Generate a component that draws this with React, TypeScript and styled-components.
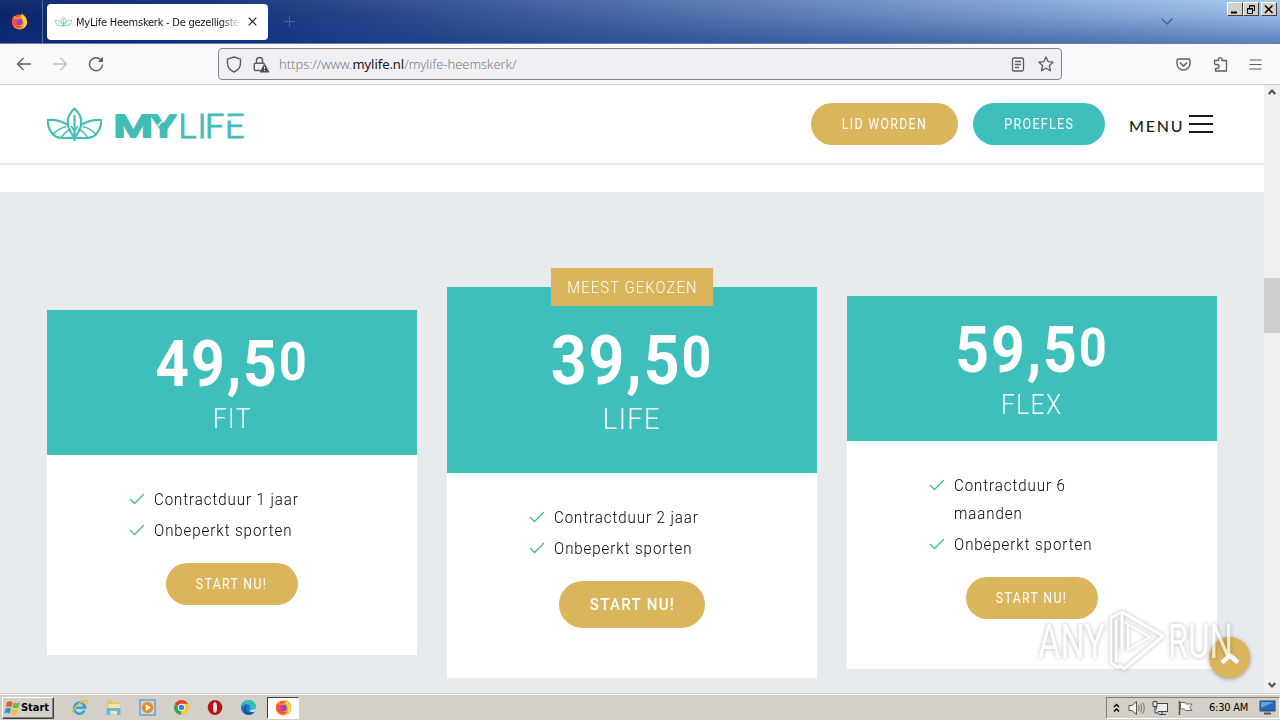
import React from "react";
import styled, { createGlobalStyle, css } from "styled-components";

const teal = "#3ebfbb";
const gold = "#dab55c";

type Plan = {
    euros: string;
    last: string;
    name: string;
    items: string[];
    featured?: boolean;
};

const plans: Plan[] = [
    { euros: "49,5", last: "0", name: "FIT", items: ["Contractduur 1 jaar", "Onbeperkt sporten"] },
    { euros: "39,5", last: "0", name: "LIFE", items: ["Contractduur 2 jaar", "Onbeperkt sporten"], featured: true },
    { euros: "59,5", last: "0", name: "FLEX", items: ["Contractduur 6 maanden", "Onbeperkt sporten"] }
];

const FirefoxIcon = ({ size = 17 }: { size?: number }) => (
    <svg width={size} height={size} viewBox="0 0 17 17">
        <circle cx="8.5" cy="9" r="7.6" fill="#ff5a36" />
        <path d="M1 9C1 5 3 3 4 2.6C4 4 5 5 7 5L10 3L11 0.5C15 3 17 7 15.6 11C14 16 7 18 3 14Z" fill="#ff9a22" />
        <path d="M11 0.5C12 4 16 5 15.8 10C15.4 14 12 16 9 16C13 14 14 10 12 7C11 5 10 3 11 0.5Z" fill="#ffd83f" />
        <circle cx="8.4" cy="9" r="3.2" fill="#8d43d6" />
        <path d="M1 8C2 15 8 17 13 13C9 14 5 12 5 8.5C6 7 8 8 9 7.4C8 6 6 6 4 6C3 5 3 4 3.2 3.4C2 4.4 1 6 1 8Z" fill="#ff4a4a" />
    </svg>
);

const Lotus = ({ w, h }: { w: number; h: number }) => (
    <svg width={w} height={h} viewBox="0 0 56 34">
        <g fill="none" stroke="#42bdb6" strokeWidth="2.1" strokeLinejoin="round">
            <path d="M28 1.5C20 9 17.500 18 28 30.500C38.500 18 36 9 28 1.500Z" />
            <path d="M28 8V34" />
            <path d="M20.500 17.500C14 13.500 7 12.500 1.200 13C1.200 22 6 31 16 31C21 31 25.500 30.800 28 30.800" />
            <path d="M35.500 17.500C42 13.500 49 12.500 54.800 13C54.800 22 50 31 40 31C35 31 30.500 30.800 28 30.800" />
            <path d="M6 28C9 24 14 21 20 19.500M50 28C47 24 42 21 36 19.500M15 30C19 25 21 23 24 22M41 30C37 25 35 23 32 22M28 24L24.500 19M28 24L31.500 19" strokeWidth="1.4" />
        </g>
    </svg>
);

const BrandLogo = () => (
    <LogoSvg width="198" height="36" viewBox="46 106 198 36">
        <g transform="translate(46.500 107)"><Lotus w={56} h={34} /></g>
        <g fill="#42bdb6" fontFamily="Roboto, sans-serif">
            <text x="113.500" y="137" fontSize="32" fontWeight="500" textLength="39.500" lengthAdjust="spacingAndGlyphs" stroke="#42bdb6" strokeWidth="2" strokeLinejoin="round">M</text>
            <text x="151" y="137" fontSize="32" fontWeight="500" textLength="25" lengthAdjust="spacingAndGlyphs" stroke="#42bdb6" strokeWidth="2" strokeLinejoin="round">Y</text>
            <text x="178.500 197.500 205 225" y="138" fontSize="34" fontWeight="300" stroke="#42bdb6" strokeWidth="1.100">LIFE</text>
        </g>
        <path d="M158 126L165.500 117" stroke="#fff" strokeWidth="1.300" />
        <path d="M226 118.500H231" stroke="#fff" strokeWidth="4" />
    </LogoSvg>
);

const App = () => (
    <Screen>
        <Global />
        <TabStrip>
            <Pinned><FirefoxIcon /></Pinned>
            <Tab>
                <Lotus w={17} h={11} />
                <TabTitle>MyLife Heemskerk - De gezelligste</TabTitle>
                <svg width="9" height="9" viewBox="0 0 9 9"><path d="M.7.7L8.300 8.300M8.300.7L.7 8.300" stroke="#222" strokeWidth="1.200" /></svg>
            </Tab>
            <NewTab><svg width="11" height="11" viewBox="0 0 11 11"><path d="M5.500 0V11M0 5.500H11" stroke="#56648a" /></svg></NewTab>
            <AllTabs><svg width="12" height="7" viewBox="0 0 12 7"><path d="M.6.6L6 6L11.400.6" fill="none" stroke="#45618f" strokeWidth="1.300" /></svg></AllTabs>
            <WindowButtons>
                <WinButton><svg width="10" height="9"><path d="M1 7.500H7" stroke="#000" strokeWidth="2" /></svg></WinButton>
                <WinButton>
                    <svg width="10" height="9" fill="none" stroke="#000"><path d="M3.500 3V.5H8.500V5.500H7M3 1H9" /><path d="M1.500 3.500H6.500V8.500H1.500ZM1 4H7" /></svg>
                </WinButton>
                <WinButton $apart><svg width="10" height="9"><path d="M1 .5L8.500 8M8.500.5L1 8" stroke="#000" strokeWidth="1.500" /></svg></WinButton>
            </WindowButtons>
        </TabStrip>

        <NavBar>
            <NavIcons>
                <svg width="16" height="16" viewBox="0 0 16 16" fill="none" stroke="#5b5b66" strokeWidth="1.300"><path d="M15 8H1.500M7.500 2L1.500 8L7.500 14" /></svg>
                <svg width="16" height="16" viewBox="0 0 16 16" fill="none" stroke="#bdbdc3" strokeWidth="1.300"><path d="M1 8H14.500M8.500 2L14.500 8L8.500 14" /></svg>
                <svg width="16" height="16" viewBox="0 0 16 16" fill="none" stroke="#5b5b66" strokeWidth="1.400"><path d="M14.500 8.500A6.500 6.500 0 1 1 12.500 3.500L14.500 5.500" /><path d="M15 .8V6H9.800Z" fill="#5b5b66" stroke="none" /></svg>
            </NavIcons>
            <UrlBox>
                <svg width="16" height="17" viewBox="0 0 16 17" fill="none" stroke="#5b5b66" strokeWidth="1.400"><path d="M8 1L14.500 3.200V7C14.500 11 12 14.300 8 16C4 14.300 1.500 11 1.500 7V3.200Z" strokeLinejoin="round" /></svg>
                <LockIcon width="17" height="17" viewBox="0 0 17 17" fill="none" stroke="#5b5b66" strokeWidth="1.500">
                    <path d="M3.500 7V4.500A3 3 0 0 1 9.500 4.500V7M7 14.500H2.500A1.200 1.200 0 0 1 1.300 13.300V8.500A1.200 1.200 0 0 1 2.500 7.200H10A1.200 1.200 0 0 1 11.300 8" />
                    <path d="M11.500 8L16 16H7Z" fill="#4a4a55" strokeWidth="1" strokeLinejoin="round" /><path d="M11.500 10.500V13M11.500 14V15" stroke="#fff" strokeWidth="1" />
                </LockIcon>
                <Url>https://www.<b>mylife.nl</b>/mylife-heemskerk/</Url>
                <svg width="14" height="15" viewBox="0 0 14 15" fill="none" stroke="#5b5b66" strokeWidth="1.300"><rect x="1.500" y="1" width="11" height="13" rx="1.500" /><path d="M4 4.500H10M4 7.500H10M4 10.500H8" /></svg>
                <StarIcon width="16" height="16" viewBox="0 0 16 16" fill="none" stroke="#5b5b66" strokeWidth="1.300"><path d="M8 1L10.100 5.600L15.200 6.100L11.400 9.500L12.500 14.800L8 12.200L3.500 14.800L4.600 9.500L.8 6.100L5.900 5.600Z" strokeLinejoin="round" /></StarIcon>
            </UrlBox>
            <ToolIcons>
                <svg width="15" height="13" viewBox="0 0 15 13" fill="none" stroke="#5b5b66" strokeWidth="1.400"><path d="M2.500 1H12.500Q14 1 14 2.500V5.500C14 9.500 11 12 7.500 12S1 9.500 1 5.500V2.500Q1 1 2.500 1Z" /><path d="M4 4.500L7.500 8L11 4.500" /></svg>
                <svg width="15" height="16" viewBox="0 0 15 16" fill="none" stroke="#5b5b66" strokeWidth="1.300"><path d="M1.500 8V4.500H5.500V3A1.800 1.800 0 0 1 9 3V4.500H13.500V15H2.500V12.500H4A2 2 0 0 0 4 8.500H1.500" strokeLinejoin="round" /></svg>
                <svg width="13" height="11" viewBox="0 0 13 11" stroke="#5b5b66" strokeWidth="1.200"><path d="M.5 1H12.500M.5 5.500H12.500M.5 10H12.500" /></svg>
            </ToolIcons>
        </NavBar>

        <Viewport>
            <Page>
                <SiteHeader>
                    <BrandLogo />
                    <HeaderRight>
                        <Pill $width={147}><Narrow $scale={0.88}>LID WORDEN</Narrow></Pill>
                        <Pill $width={132} $color={teal}><Narrow $scale={0.89}>PROEFLES</Narrow></Pill>
                        <Menu><span>MENU</span><Bars><i /><i /><i /></Bars></Menu>
                    </HeaderRight>
                </SiteHeader>
                <Plans>
                    {plans.map((plan) => {
                        return (
                            <Card key={plan.name} $featured={plan.featured}>
                                {plan.featured && <Ribbon><Narrow $scale={0.925}>MEEST GEKOZEN</Narrow></Ribbon>}
                                <CardHead $featured={plan.featured}>
                                    <Price $featured={plan.featured}>{plan.euros}<span>{plan.last}</span></Price>
                                    <PlanName $featured={plan.featured}><Narrow $scale={0.91}>{plan.name}</Narrow></PlanName>
                                </CardHead>
                                <CardBody>
                                    <List>
                                        {plan.items.map((item) => (
                                            <li key={item}>
                                                <svg width="16" height="12" viewBox="0 0 16 12"><path d="M1 6L5.500 10.500L15 1" fill="none" stroke="#45b5ac" strokeWidth="1.300" /></svg>
                                                <Narrow $scale={0.94} $left>{item}</Narrow>
                                            </li>
                                        ))}
                                    </List>
                                    <Pill $width={plan.featured ? 146 : 132} $big={plan.featured}>
                                        <Narrow $scale={plan.featured ? 0.94 : 0.88}>START NU!</Narrow>
                                    </Pill>
                                </CardBody>
                            </Card>
                        );
                    })}
                </Plans>
            </Page>
            <Scrollbar>
                <svg width="8" height="6" viewBox="0 0 8 6"><path d="M.7 5L4 1.500L7.300 5" fill="none" stroke="#505050" strokeWidth="2" /></svg>
                <Thumb />
                <svg width="8" height="6" viewBox="0 0 8 6"><path d="M.7 1L4 4.500L7.300 1" fill="none" stroke="#505050" strokeWidth="2" /></svg>
            </Scrollbar>
            <ToTop><svg width="20" height="14" viewBox="0 0 20 14"><path d="M2 11.500L10 4.500L18 11.500" fill="none" stroke="#fff" strokeWidth="4.600" /></svg></ToTop>
            <Watermark width="206" height="74" viewBox="1034 604 206 74">
                <g fill="#fff" fontFamily="Roboto, sans-serif" fontSize="49" fontWeight="400">
                    <text x="1038" y="658" textLength="67" lengthAdjust="spacingAndGlyphs">ANY</text>
                    <text x="1168" y="658" textLength="65" lengthAdjust="spacingAndGlyphs">RUN</text>
                </g>
                <g fill="none" stroke="#fff" strokeWidth="3" strokeLinejoin="round">
                    <path d="M1122 612V650M1122 612L1163 636L1124 669L1119 665" />
                    <path d="M1122 612L1111 618V663L1119 668M1116 620V662" strokeWidth="2.500" />
                    <path d="M1128 624V650L1150 637L1124 622" strokeWidth="2" />
                </g>
            </Watermark>
        </Viewport>

        <Taskbar>
            <Start>
                <svg width="17" height="16" viewBox="0 0 17 16">
                    <path d="M3 2Q6 .5 8.500 2L7.300 7Q5 6 2 7Z" fill="#e8592b" /><path d="M9.500 2.500Q12 4 16 2.500L14.500 7.500Q11 9 8.300 7.500Z" fill="#7cb63a" />
                    <path d="M1.700 8.500Q4.500 7 7 8.500L5.700 13.500Q3 12 .3 13.500Z" fill="#3b8be0" /><path d="M8 9Q11 10.500 14.200 9L13 14Q10 15.500 6.800 14Z" fill="#f6c22e" />
                </svg>
                Start
            </Start>
            <Launchers>
                <svg width="17" height="17" viewBox="0 0 17 17">
                    <path d="M13.500 11.500A5.500 5.500 0 1 1 14 8.800H4" fill="none" stroke="#38a3df" strokeWidth="2.600" />
                    <path d="M1.500 15.500C-1 13 8 2 15.500 1.500Q17 2 15 5" fill="none" stroke="#e6bd3c" strokeWidth="1.300" />
                </svg>
                <svg width="17" height="17" viewBox="0 0 17 17">
                    <path d="M2 1.500H7L8 3.500H14V14H2Z" fill="#e3c75e" /><path d="M3.500 5H15V14H3.500Z" fill="#f7e8a0" />
                    <path d="M1.500 9H15.500V16H12V12H5.500V16H1.500Z" fill="#69b6dc" /><path d="M5.500 12H12V15H5.500Z" fill="#f6e9b4" />
                </svg>
                <svg width="17" height="17" viewBox="0 0 17 17">
                    <rect x="1" y="1" width="15" height="15" fill="#b9ddf3" stroke="#4a84b8" /><circle cx="8.500" cy="8.500" r="5.800" fill="#f28a1c" /><path d="M6.800 5.300L12 8.500L6.800 11.700Z" fill="#fff" />
                </svg>
                <svg width="17" height="17" viewBox="0 0 17 17">
                    <circle cx="8.500" cy="8.500" r="7.500" fill="#f8c92a" /><path d="M2 4.750A7.500 7.500 0 0 1 15 4.750H8.500L5.250 10.400Z" fill="#e2402f" />
                    <path d="M2 4.750L5.250 10.400L8.500 12L8 16A7.500 7.500 0 0 1 2 4.750Z" fill="#35a551" /><circle cx="8.500" cy="8.500" r="3.700" fill="#fff" /><circle cx="8.500" cy="8.500" r="2.800" fill="#3f7fe8" />
                </svg>
                <svg width="17" height="17" viewBox="0 0 17 17"><ellipse cx="8" cy="8.500" rx="7.300" ry="7.500" fill="#b5141d" /><ellipse cx="8" cy="8.500" rx="2" ry="5.300" fill="#f1e1dd" /></svg>
                <svg width="17" height="17" viewBox="0 0 17 17">
                    <circle cx="8.500" cy="8.500" r="7.600" fill="#1b79cc" /><path d="M1 8C2 -1 14 -1 16 7C16.500 11 12 12 10 10.500C12 7 8 4 5 5.500C3 6 2 7 1 8Z" fill="#36c0b5" />
                    <path d="M6 9C5 13 10 15 14.500 12.500C12 17 4 17 3 11C3 8 5 7 7 7Z" fill="#1454a5" /><path d="M10 10.500Q12 13 16 9L15 12.500Q12 13.500 9.500 12Z" fill="#e2ecee" />
                </svg>
                <ActiveApp><FirefoxIcon size={17} /></ActiveApp>
            </Launchers>
            <Tray>
                <svg width="7" height="10" viewBox="0 0 7 10" fill="none" stroke="#000" strokeWidth="1.400"><path d="M1 4L3.500 1.500L6 4M1 8.500L3.500 6L6 8.500" /></svg>
                <svg width="17" height="16" viewBox="0 0 17 16"><path d="M1 5.500H4L8.500 1.500V14.500L4 10.500H1Z" fill="#f5f5f5" stroke="#555" /><path d="M10.500 5Q12 8 10.500 11M12.500 3.500Q15 8 12.500 12.500M14.500 2Q18 8 14.500 14" fill="none" stroke="#777" /></svg>
                <svg width="17" height="16" viewBox="0 0 17 16"><rect x="4.500" y="3.500" width="11" height="8" fill="#eee" stroke="#444" /><path d="M7 14.500H14M10 12V14M1 1.500H5V6.500H1ZM3 7V13H7" fill="#ddd" stroke="#444" /></svg>
                <svg width="17" height="16" viewBox="0 0 17 16"><path d="M2.500 1V15" stroke="#555" strokeWidth="1.500" /><path d="M3.500 2.500H8L9 4H15L13 7.500L15 10.500H8.500L7.500 9H3.500Z" fill="#fff" stroke="#666" /></svg>
                <Clock>6:30 AM</Clock>
                <svg width="17" height="15" viewBox="0 0 17 15"><rect x="1" y="1" width="15" height="10" fill="#2869b6" stroke="#234b80" /><path d="M2 2H15L2 8Z" fill="#62a5df" /><path d="M5 13.500H12" stroke="#555" strokeWidth="2" /></svg>
            </Tray>
        </Taskbar>
    </Screen>
);

export default App;

const Global = createGlobalStyle`
  * { box-sizing: border-box; }
  body { margin: 0; background: #fff; }
  svg { display: block; flex: none; }
`;

const Screen = styled.div`
  width: 1280px;
  height: 720px;
  overflow: hidden;
  display: flex;
  flex-direction: column;
  font-family: Roboto, "Liberation Sans", sans-serif;
`;

const Narrow = styled.span<{ $scale: number; $left?: boolean }>`
  display: inline-block;
  transform: scaleX(${(p) => p.$scale});
  transform-origin: ${(p) => (p.$left ? "left" : "center")};
`;

const LogoSvg = styled.svg`
  overflow: visible;
`;

const TabStrip = styled.div`
  height: 44px;
  flex: none;
  display: flex;
  align-items: center;
  border-bottom: 1px solid #6c7da5;
  background:
    linear-gradient(180deg, rgba(255, 255, 255, 0.04), rgba(10, 50, 130, 0.1) 35%, rgba(10, 50, 130, 0.48)),
    linear-gradient(90deg, #0a246a 0%, #12307a 16%, #a6caf0 100%);
`;

const Pinned = styled.div`
  width: 43px;
  height: 43px;
  display: flex;
  align-items: center;
  padding-left: 11px;
  border-right: 1px solid #56689c;
`;

const Tab = styled.div`
  width: 221px;
  height: 36px;
  margin-left: 4px;
  padding: 0 11px 0 8px;
  display: flex;
  align-items: center;
  border-radius: 4px;
  background: #fff;
`;

const TabTitle = styled.div`
  width: 165px;
  margin: 2px 7px 0 4px;
  overflow: hidden;
  white-space: nowrap;
  font: 11px "DejaVu Sans Condensed", "DejaVu Sans", sans-serif;
  font-stretch: condensed;
  letter-spacing: -0.240px;
  color: #15141a;
  mask-image: linear-gradient(90deg, #000 88%, transparent);
`;

const NewTab = styled.div`
  margin-left: 16px;
`;

const AllTabs = styled.div`
  margin-left: auto;
`;

const WindowButtons = styled.div`
  display: flex;
  align-self: flex-start;
  margin: 2px 3px 0 54px;
`;

const WinButton = styled.div<{ $apart?: boolean }>`
  width: 16px;
  height: 14px;
  display: flex;
  justify-content: center;
  align-items: center;
  margin-left: ${(p) => (p.$apart ? 2 : 0)}px;
  background: #d4d0c8;
  border: 1px solid;
  border-color: #fff #404040 #404040 #fff;
`;

const NavBar = styled.div`
  height: 41px;
  flex: none;
  display: flex;
  align-items: center;
  border-bottom: 1px solid #ccccd0;
  background: #f9f9fb;
`;

const NavIcons = styled.div`
  width: 218px;
  display: flex;
  gap: 20px;
  padding-left: 16px;
`;

const UrlBox = styled.div`
  width: 844px;
  height: 32px;
  display: flex;
  align-items: center;
  padding: 0 7px;
  border: 1px solid #83838a;
  border-radius: 4px;
  background: #f0f0f4;
`;

const LockIcon = styled.svg`
  margin-left: 11px;
`;

const StarIcon = styled.svg`
  margin-left: 13px;
`;

const Url = styled.div`
  flex: 1;
  margin-left: 9px;
  font: 300 13px "Noto Sans", sans-serif;
  letter-spacing: -0.050px;
  color: #7a7a82;

  b {
    font-weight: 400;
    color: #15141a;
  }
`;

const ToolIcons = styled.div`
  flex: 1;
  display: flex;
  align-items: center;
  justify-content: flex-end;
  gap: 21.500px;
  padding-right: 18px;
`;

const Viewport = styled.div`
  position: relative;
  height: 608px;
  flex: none;
  display: flex;
`;

const Page = styled.main`
  width: 1264px;
  background: #fff;
`;

const SiteHeader = styled.header`
  height: 80px;
  display: flex;
  align-items: center;
  justify-content: space-between;
  padding: 0 51px 0 46px;
  border-bottom: 2px solid #e5e7e9;
`;

const HeaderRight = styled.div`
  display: flex;
  align-items: center;
  gap: 15px;
`;

const Pill = styled.button<{ $width: number; $color?: string; $big?: boolean }>`
  width: ${(p) => p.$width}px;
  height: ${(p) => (p.$big ? 47 : 42)}px;
  padding: 0;
  border: 0;
  border-radius: 24px;
  background: ${(p) => p.$color || gold};
  color: #fff;
  font: ${(p) => (p.$big ? "500 16px" : "400 14px")} Roboto, sans-serif;
  letter-spacing: ${(p) => (p.$big ? 1.4 : 1.5)}px;
  white-space: nowrap;
`;

const Menu = styled.div`
  display: flex;
  align-items: center;
  justify-content: space-between;
  width: 84px;
  margin-left: 9px;
  font: 500 16px Lato, sans-serif;
  letter-spacing: 1.800px;
  color: #1c1c1c;

  > span:first-child {
    padding-top: 2px;
  }
`;

const Bars = styled.span`
  width: 24px;
  display: grid;
  gap: 6px;

  i {
    height: 2px;
    background: #1c1c1c;
  }
`;

const Plans = styled.section`
  height: 501px;
  margin-top: 27px;
  padding: 95px 47px 15px;
  display: flex;
  align-items: center;
  gap: 30px;
  background: #e7ebee;
`;

const Card = styled.article<{ $featured?: boolean }>`
  position: relative;
  width: 370px;
  background: #fff;
  padding-bottom: 50px;
`;

const Ribbon = styled.div`
  position: absolute;
  top: -19px;
  left: 104px;
  width: 162px;
  height: 38px;
  text-align: center;
  background: ${gold};
  color: #fff;
  font-size: 16px;
  font-weight: 300;
  line-height: 39px;
  letter-spacing: 1.200px;
`;

const CardHead = styled.div<{ $featured?: boolean }>`
  height: ${(p) => (p.$featured ? 186 : 144.5)}px;
  padding-top: ${(p) => (p.$featured ? 39 : 20)}px;
  background: ${teal};
  color: #fff;
  text-align: center;
`;

const Price = styled.div<{ $featured?: boolean }>`
  height: 70px;
  font-size: ${(p) => (p.$featured ? 68 : 64)}px;
  font-weight: 700;
  line-height: 70px;
  letter-spacing: 2.100px;
  white-space: nowrap;
  transform: scaleX(0.920);

  span {
    font-size: 0.830em;
    line-height: 1;
    vertical-align: 0.120em;
  }
`;

const PlanName = styled.div<{ $featured?: boolean }>`
  margin-top: ${(p) => (p.$featured ? 6 : 2)}px;
  line-height: 34px;
  letter-spacing: 1.500px;
  font-weight: 300;
  ${(p) => (p.$featured ? css`font-size: 30px;` : css`font-size: 27px;`)}
`;

const CardBody = styled.div`
  display: flex;
  flex-direction: column;
  align-items: center;
`;

const List = styled.ul`
  width: 206px;
  margin: 31px 0 15.500px;
  padding: 0;
  list-style: none;
  font-size: 16px;
  font-weight: 300;
  line-height: 28px;
  letter-spacing: 1px;
  color: #000;

  li {
    display: flex;
    gap: 9px;
    margin-bottom: 3px;
  }

  svg {
    margin-top: 7px;
  }
`;

const Scrollbar = styled.div`
  width: 16px;
  display: flex;
  flex-direction: column;
  align-items: center;
  justify-content: space-between;
  padding: 4px 0 5px;
  background: #f0f0f0;
`;

const Thumb = styled.div`
  width: 16px;
  height: 55px;
  margin-bottom: 167px;
  background: #cdcdcd;
`;

const ToTop = styled.div`
  position: absolute;
  left: 1209px;
  top: 552px;
  width: 41px;
  height: 41px;
  display: flex;
  justify-content: center;
  align-items: center;
  border-radius: 50%;
  background: ${gold};
  box-shadow: 0 1px 4px rgba(0, 0, 0, 0.350);
`;

const Watermark = styled.svg`
  position: absolute;
  left: 1034px;
  top: 519px;
  opacity: 0.700;
  overflow: visible;
  filter: drop-shadow(0 0 2px rgba(0, 0, 0, 0.400));
`;

const Taskbar = styled.footer`
  height: 27px;
  display: flex;
  align-items: center;
  padding-top: 1px;
  border-top: 1px solid #d4d0c8;
  box-shadow: inset 0 1px #fff;
  background: #d4d0c8;
`;

const Start = styled.div`
  width: 52px;
  height: 22px;
  margin-left: 2px;
  padding-left: 1px;
  display: flex;
  align-items: center;
  border: 1px solid;
  border-color: #fff #404040 #404040 #fff;
  box-shadow: inset -1px -1px #808080;
  font: 700 11px "DejaVu Sans Condensed", "DejaVu Sans", sans-serif;
  letter-spacing: -0.050px;
`;

const Launchers = styled.div`
  display: flex;
  align-items: center;
  gap: 16.900px;
  padding-left: 17px;
`;

const ActiveApp = styled.div`
  width: 32px;
  height: 22px;
  margin-left: -7px;
  display: flex;
  justify-content: center;
  align-items: center;
  border: 1px solid;
  border-color: #404040 #fff #fff #404040;
  background: #fff;
`;

const Tray = styled.div`
  width: 174px;
  height: 22px;
  margin-left: auto;
  padding: 0 3px 0 6px;
  display: flex;
  align-items: center;
  justify-content: space-between;
  border: 1px solid;
  border-color: #808080 #fff #fff #808080;
`;

const Clock = styled.div`
  margin: 0 3px 0 7px;
  font: 11px "DejaVu Sans Condensed", "DejaVu Sans", sans-serif;
  letter-spacing: -0.200px;
  white-space: nowrap;
`;
